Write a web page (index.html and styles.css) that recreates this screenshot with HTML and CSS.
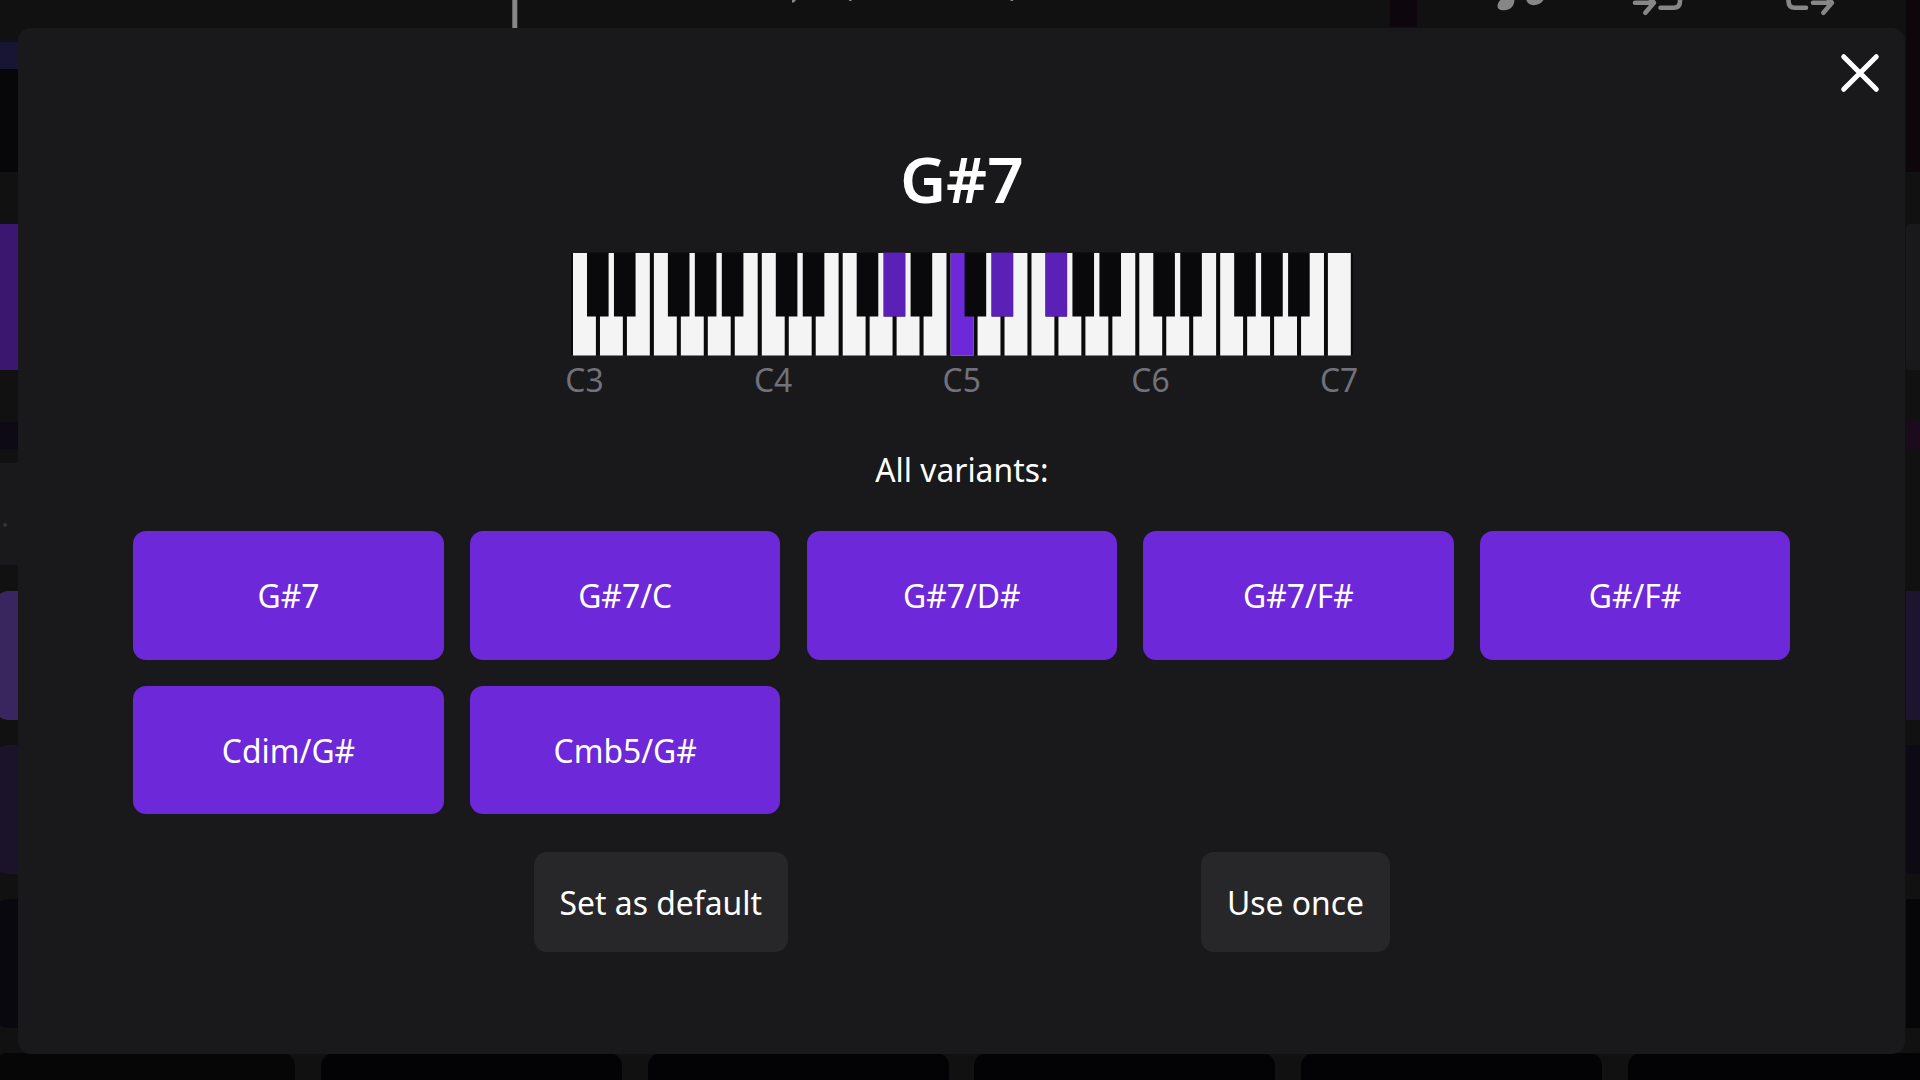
FILE: index.html
```html
<!DOCTYPE html>
<html lang="en">
<head>
<meta charset="utf-8">
<title>G#7</title>
<link rel="stylesheet" href="styles.css">
</head>
<body>
<div class="app">
  <div class="edges">
    <div class="edge">
      <div class="band h-top"></div>
      <div class="band h-strip navy"></div>
      <div class="band h-display black"></div>
      <div class="band h-gap"></div>
      <div class="band h-main violet"></div>
      <div class="band h-gap"></div>
      <div class="band h-line deep-navy"></div>
      <div class="band h-small"></div>
      <div class="band h-panel panel"><span class="dot"></span></div>
      <div class="pads">
        <div class="pad pad-left bright"></div>
        <div class="pad pad-left dim"></div>
        <div class="pad pad-left dark"></div>
      </div>
    </div>
    <svg class="toolbar" width="1888" height="28" viewBox="18 0 1888 28" fill="none" stroke="#878787" stroke-width="4.6" stroke-linecap="round" stroke-linejoin="round">
      <rect x="1389.8" y="0" width="27" height="27" fill="#0d060d" stroke="none"/>
      <path d="M514.800-4V28" stroke-width="5" stroke-linecap="butt"/>
      <path d="M792 0h4l-2 2.500h-2zM849 0h2.600v1h-2.600zM1010.500 0h2.600v1h-2.600z" fill="#878787" stroke="none"/>
      <path d="M1501.500-1C1498.500 1.500 1497.500 4 1497.500 6C1497.500 9 1500 10.300 1504 10.300C1510 10.300 1514.400 6.500 1514.400 0V-1zM1526-1C1527 3 1529.500 5.200 1533.500 5.200C1538.500 5.200 1542.500 2.500 1544-1z" fill="#878787" stroke="none"/>
      <path d="M1635 2.700h18.500M1645.400-7l8.500 9.700-8.500 10M1660.500 7.800h13q6.500 0 6.500-6.500V-6"/>
      <path d="M1813 2.700h18.500M1823.400-7l8.500 9.700-8.500 10M1806 7.800h-11q-6.500 0-6.500-6.500V-6"/>
    </svg>
    <div class="edge">
      <div class="band h-head plum"></div>
      <div class="band h-gap"></div>
      <div class="band h-main panel panel-round"></div>
      <div class="band h-gap"></div>
      <div class="band h-line magenta"></div>
      <div class="band h-rest"></div>
      <div class="pads">
        <div class="pad indigo"></div>
        <div class="pad ink"></div>
        <div class="pad night"></div>
      </div>
    </div>
  </div>
  <div class="bottom-row">
    <div class="bottom-pad first"></div>
    <div class="bottom-pad"></div>
    <div class="bottom-pad"></div>
    <div class="bottom-pad"></div>
    <div class="bottom-pad"></div>
    <div class="bottom-pad"></div>
  </div>
</div>

<main class="modal">
  <button class="close" aria-label="Close">
    <svg width="40" height="40" viewBox="0 0 40 40" stroke="#fff" stroke-width="5" stroke-linecap="round"><path d="M3.700 3.700l32.600 32.600M36.300 3.700L3.700 36.300"/></svg>
  </button>
  <h1 class="title">G#7</h1>
  <svg class="piano" width="784" height="104" viewBox="570 252 784 104">
    <defs>
      <g id="octave-white">
        <path d="M0 0h22.900v102.500H0zM26.960 0h22.900v102.500h-22.900zM53.920 0h22.900v102.500h-22.900zM80.890 0h22.900v102.500h-22.900zM107.850 0h22.900v102.500h-22.900zM134.810 0h22.900v102.500h-22.900zM161.770 0h22.900v102.500h-22.900z"/>
      </g>
      <g id="octave-black">
        <path d="M14.200 0h21.600v63.900h-21.600zM41.160 0h21.600v63.900h-21.600zM95.090 0h21.600v63.900h-21.600zM122.050 0h21.600v63.900h-21.600zM149.010 0h21.600v63.900h-21.600z"/>
      </g>
    </defs>
    <rect x="571.100" y="253" width="782" height="102.200" fill="#0a0a0c"/>
    <g fill="#f4f4f4">
      <use href="#octave-white" x="573" y="253"/>
      <use href="#octave-white" x="761.800" y="253"/>
      <use href="#octave-white" x="950.600" y="253"/>
      <use href="#octave-white" x="1139.300" y="253"/>
      <rect x="1327.900" y="253" width="22.900" height="102.500"/>
    </g>
    <rect x="950.600" y="253" width="22.900" height="102.500" fill="#6d28d9"/>
    <g fill="#09090b">
      <use href="#octave-black" x="572.800" y="252.600"/>
      <use href="#octave-black" x="761.600" y="252.600"/>
      <use href="#octave-black" x="950.400" y="252.600"/>
      <use href="#octave-black" x="1139.100" y="252.600"/>
    </g>
    <path fill="#5b21b6" d="M883.650 252.600h21.600v63.900h-21.600zM991.560 252.600h21.600v63.900h-21.600zM1045.490 252.600h21.600v63.900h-21.600z"/>
  </svg>
  <div class="octaves"><span>C3</span><span>C4</span><span>C5</span><span>C6</span><span>C7</span></div>
  <p class="caption">All variants:</p>
  <div class="variants">
    <button class="variant">G#7</button>
    <button class="variant">G#7/C</button>
    <button class="variant">G#7/D#</button>
    <button class="variant">G#7/F#</button>
    <button class="variant">G#/F#</button>
    <button class="variant">Cdim/G#</button>
    <button class="variant">Cmb5/G#</button>
  </div>
  <div class="actions">
    <button class="action">Set as default</button>
    <button class="action">Use once</button>
  </div>
</main>
</body>
</html>
```
FILE: styles.css
```css
* { box-sizing: border-box; }

body {
  margin: 0;
  width: 1920px;
  height: 1080px;
  overflow: hidden;
  background: #111112;
  color: #fff;
  font-family: "Noto Sans", sans-serif;
  font-size: 31.850px;
}

button {
  border: 0;
  padding: 0;
  color: inherit;
  font: inherit;
}

.app { height: 1080px; overflow: hidden; }
.edges { display: flex; height: 1053px; }
.edge { display: flex; flex-direction: column; width: 18px; overflow: hidden; }
.edge:last-child { width: 14px; }
.toolbar { display: block; flex: none; }
.band { flex: none; }

.h-top { height: 42px; }
.h-strip { height: 26.500px; }
.h-display { height: 103px; }
.h-head { height: 171.500px; }
.h-gap { height: 52px; }
.h-main { height: 146.500px; }
.h-line { height: 26.500px; }
.h-small { height: 14px; }
.h-panel { height: 102.500px; }
.h-rest { height: 116.500px; }

.navy { background: #181433; }
.black { background: #070709; }
.violet { background: #3b176f; }
.deep-navy { background: #0d0a16; }
.panel { background: #19191b; }
.panel-round { border-radius: 4px 0 0 4px; }
.plum { background: #0d060b; }
.magenta { background: #1b0b1d; }

.dot {
  display: block;
  width: 4px;
  height: 4px;
  margin: 60.500px 0 0 3px;
  border-radius: 50%;
  background: #343436;
}

.pads { display: flex; flex-direction: column; gap: 25.500px; padding-top: 26px; }
.pad { flex: none; height: 128.500px; }
.pad-left { width: 60px; margin-left: -5px; border-radius: 13px; }
.bright { background: #3a265f; }
.dim { background: #1b132a; }
.dark { background: #09080f; }
.indigo { background: #1d142f; }
.ink { background: #0d0a14; }
.night { background: #060609; }

.bottom-row { display: flex; gap: 25.800px; height: 27px; margin-left: -6px; }
.bottom-pad { flex: none; width: 301px; height: 60px; border-radius: 13px; background: #030305; }
.first { background: #060607; }

.modal {
  position: absolute;
  left: 18.400px;
  top: 28px;
  display: flex;
  flex-direction: column;
  align-items: center;
  width: 1886.800px;
  height: 1026px;
  padding: 0 114.900px;
  border-radius: 13px;
  background: #19191b;
}

.close {
  position: absolute;
  right: 24.800px;
  top: 24.700px;
  width: 40px;
  height: 40px;
  background: none;
}
.close svg { display: block; }

.title {
  margin: 107px 0 0;
  font-size: 63.700px;
  font-weight: 600;
  line-height: 88px;
}

.piano { display: block; flex: none; margin-top: 29px; }

.octaves {
  display: flex;
  justify-content: space-between;
  width: 793px;
  line-height: 44px;
  margin-top: 2px;
  color: #71717a;
}

.caption { margin: 46px 0 0; line-height: 44px; }

.variants {
  display: grid;
  grid-template-columns: repeat(5, 1fr);
  grid-auto-rows: 128.400px;
  gap: 26.200px;
  width: 100%;
  margin-top: 39.400px;
}

.variant { border-radius: 13px; background: #6d28d9; }

.actions { display: flex; gap: 413px; margin-top: 37.600px; }
.action { height: 100.500px; padding: 0 26px; border-radius: 13px; background: #27272a; }
```
